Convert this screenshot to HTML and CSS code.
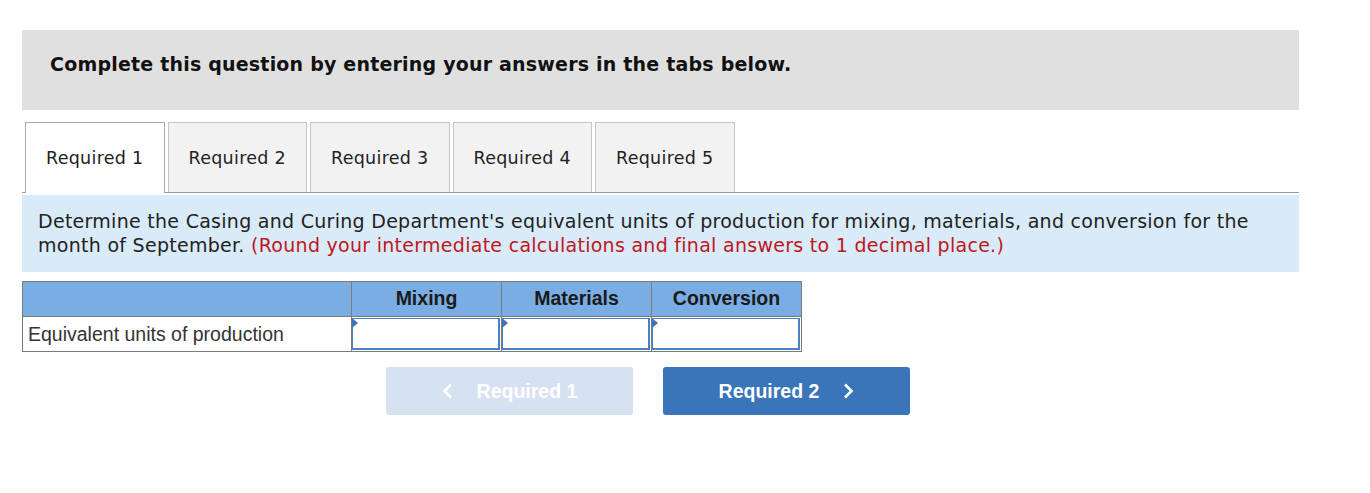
FILE: index.html
```html
<!DOCTYPE html>
<html>
<head>
    <title>Required 1</title>
    <link rel="stylesheet" href="styles.css">
</head>
<body>
    <div class="question">
        <div class="instructions">
            <h2>Complete this question by entering your answers in the tabs below.</h2>
        </div>

        <div class="tabs">
            <div class="tab active">Required 1</div>
            <div class="tab">Required 2</div>
            <div class="tab">Required 3</div>
            <div class="tab">Required 4</div>
            <div class="tab">Required 5</div>
        </div>

        <div class="prompt">
            <span>Determine the Casing and Curing Department's equivalent units of production for mixing, materials, and conversion for the month of September.</span>
            <span class="note">(Round your intermediate calculations and final answers to 1 decimal place.)</span>
        </div>

        <table class="answers">
            <colgroup>
                <col class="col-label">
                <col class="col-num">
                <col class="col-num">
                <col class="col-num">
            </colgroup>
            <tr class="head">
                <th></th>
                <th>Mixing</th>
                <th>Materials</th>
                <th>Conversion</th>
            </tr>
            <tr>
                <td class="label">Equivalent units of production</td>
                <td class="cell"><input type="text"></td>
                <td class="cell"><input type="text"></td>
                <td class="cell"><input type="text"></td>
            </tr>
        </table>

        <div class="nav">
            <button class="nav-btn prev" disabled>
                <svg class="chev" width="11" height="16" viewBox="0 0 11 16"><path d="M9 1.5 L2.5 8 L9 14.5" fill="none" stroke="white" stroke-width="2.6"/></svg>
                Required 1
            </button>
            <button class="nav-btn next">
                Required 2
                <svg class="chev" width="11" height="16" viewBox="0 0 11 16"><path d="M2 1.5 L8.5 8 L2 14.5" fill="none" stroke="white" stroke-width="2.6"/></svg>
            </button>
        </div>
    </div>
</body>
</html>
```

FILE: styles.css
```css
body {
    margin: 0;
    background: white;
    font-family: "DejaVu Sans", Verdana, sans-serif;
    color: #111;
}

.question {
    width: 1277px;
    margin: 30px 0 0 22px;
}

.instructions {
    background: #e0e0e0;
    height: 80px;
    padding: 0 28px;
    display: flex;
    align-items: center;
}

.instructions h2 {
    margin: 0 0 13px 0;
    font-size: 19px;
    font-weight: bold;
    letter-spacing: 0.2px;
}

.tabs {
    display: flex;
    gap: 3px;
    margin-top: 12px;
    padding-left: 3px;
    border-bottom: 1px solid #999;
    height: 70px;
}

.tab {
    width: 139.5px;
    height: 70px;
    box-sizing: border-box;
    border: 1px solid #c6c6c6;
    border-bottom: none;
    background: #f2f2f2;
    display: flex;
    align-items: center;
    justify-content: center;
    font-size: 17.5px;
    letter-spacing: 0.3px;
    color: #222;
}

.tab.active {
    background: white;
    height: 71px;
    border-color: #aaa;
}

.prompt {
    background: #d9ebf9;
    margin-top: 2px;
    padding: 14px 30px 15px 16px;
    font-size: 19px;
    letter-spacing: 0.28px;
    line-height: 24px;
    color: #222;
}

.note {
    color: #c0161d;
}

.answers {
    margin-top: 9px;
    border-collapse: collapse;
    table-layout: fixed;
    width: 779px;
    font-family: "Liberation Sans", Arial, sans-serif;
}

.col-label {
    width: 329px;
}

.col-num {
    width: 150px;
}

.answers th,
.answers td {
    border: 1px solid #7a7a7a;
    padding: 0;
}

.answers th {
    background: #7aade4;
    height: 35px;
    font-size: 19.5px;
    font-weight: bold;
    color: #1a1a1a;
    vertical-align: top;
    padding-top: 5px;
    box-sizing: border-box;
}

.answers td.label {
    height: 33px;
    font-size: 19.5px;
    color: #333;
    padding-left: 5px;
}

.answers td.cell {
    position: relative;
    padding: 1px 1px 1px 0;
}

.answers td.cell::before {
    content: "";
    position: absolute;
    top: 1px;
    left: 0;
    border-top: 5px solid transparent;
    border-bottom: 5px solid transparent;
    border-left: 6px solid #3a74ba;
}

.answers input {
    display: block;
    width: 100%;
    height: 32px;
    box-sizing: border-box;
    border: 2px solid #4a80c4;
    border-top-width: 1px;
    border-left-width: 1px;
    outline: none;
    margin: 0;
}

.nav {
    display: flex;
    gap: 30px;
    margin-top: 15px;
    padding-left: 364px;
}

.nav-btn {
    width: 247px;
    height: 48px;
    border: none;
    border-radius: 3px;
    font-family: "Liberation Sans", Arial, sans-serif;
    font-size: 19.5px;
    font-weight: bold;
    color: white;
    display: flex;
    align-items: center;
    justify-content: center;
    gap: 24px;
}

.prev {
    background: #d6e2f1;
}

.next {
    background: #3a75b9;
}

.chev {
    display: block;
    margin-top: -1px;
}
```
